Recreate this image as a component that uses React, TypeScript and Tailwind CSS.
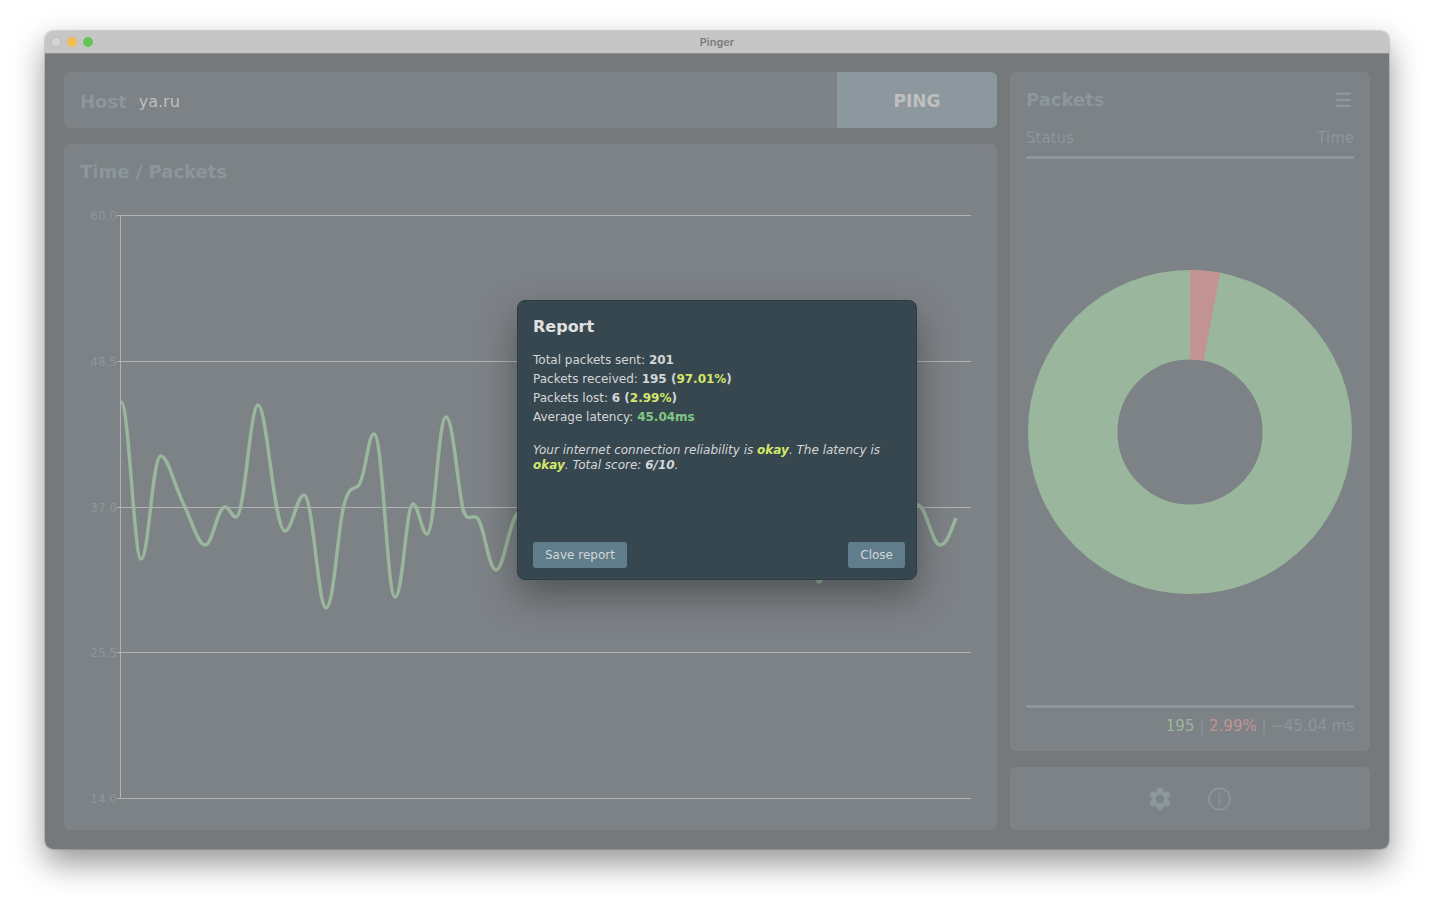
import React from "react";

const gridLines = [
  { label: "60.0", y: 215 },
  { label: "48.5", y: 361 },
  { label: "37.0", y: 507 },
  { label: "25.5", y: 652 },
  { label: "14.0", y: 798 },
];

const latencyCurve =
  "M121 402 C129 402 134 559 141 559 C149 559 152 456 161 456 C168 456 174 485 184 505 " +
  "C192 521 198 545 205 545 C213 545 217 507 225 507 C230 507 231 517 236 517 " +
  "C245 517 250 405 258 405 C267 405 274 531 285 531 C292 531 297 495 304 495 " +
  "C313 495 318 608 326 608 C334 608 338 525 344 505 C350 483 354 491 359 485 " +
  "C366 474 368 434 374 434 C383 434 387 597 395 597 C403 597 406 504 413 504 " +
  "C418 504 422 534 427 534 C435 534 438 417 446 417 C453 417 457 482 463 509 " +
  "C467 523 471 515 476 517 C484 520 488 570 496 570 C504 570 509 520 518 513 " +
  "C530 505 536 530 546 530 C558 530 562 470 574 470 C586 470 590 540 602 540 " +
  "C614 540 618 480 630 480 C642 480 646 550 658 550 C670 550 674 470 686 470 " +
  "C698 470 702 540 714 540 C726 540 732 480 744 480 C756 480 760 530 772 530 " +
  "C784 530 786 490 796 490 C806 490 811 582 819 582 C829 582 834 480 846 480 " +
  "C858 480 864 540 876 540 C888 540 906 505 918 505 C926 505 932 545 940 545 C947 545 951 530 956 518";

function LatencyChart() {
  return (
    <svg viewBox="80 192 901 622" className="min-h-0 w-full flex-1" role="img" aria-label="Time / Packets">
      {gridLines.map((g) => (
        <g key={g.label}>
          <line x1="117" x2="971" y1={g.y + 0.5} y2={g.y + 0.5} stroke="#b0b2b3" strokeWidth="1" />
          <text x="117" y={g.y + 5} textAnchor="end" fontSize="12" fill="#8d979b">
            {g.label}
          </text>
        </g>
      ))}
      <line x1="120.5" x2="120.5" y1="215" y2="798" stroke="#b0b2b3" strokeWidth="1" />
      <path d={latencyCurve} fill="none" stroke="#9ab69c" strokeWidth="3.5" />
    </svg>
  );
}

function PacketsDonut() {
  return (
    <svg viewBox="0 0 324 324" className="w-full max-w-[324px]" role="img" aria-label="Received and lost packets">
      <circle cx="162" cy="162" r="117.25" fill="none" stroke="#9ab69c" strokeWidth="89.5" />
      <path d="M162 0 A162 162 0 0 1 192.2 2.85 L175.5 90.8 A72.5 72.5 0 0 0 162 89.5 Z" fill="#c39393" />
    </svg>
  );
}

function Dashboard() {
  return (
    <div className="flex flex-1 gap-[13px] bg-[#75797c] px-[19px] pt-[18px] pb-[19px] text-[#8b979d]">
      <main className="flex min-w-0 flex-1 flex-col gap-4">
        <div className="flex h-14 items-stretch overflow-hidden rounded-md bg-[#7d8286]">
          <label htmlFor="host" className="flex items-center pt-[3px] pl-4 text-lg font-bold">
            Host
          </label>
          <input
            id="host"
            defaultValue="ya.ru"
            className="min-w-0 flex-1 bg-transparent px-3 pt-[3px] text-base text-[#bfbfbf] outline-none"
          />
          <button className="w-40 bg-[#8c989e] pt-[3px] text-[17px] font-bold text-[#bfbfbf]">PING</button>
        </div>
        <section className="flex flex-1 flex-col rounded-md bg-[#7d8286] p-4">
          <h2 className="mb-2 text-lg leading-6 font-bold">Time / Packets</h2>
          <LatencyChart />
        </section>
      </main>
      <aside className="flex w-[360px] flex-col gap-4">
        <section className="flex flex-1 flex-col rounded-md bg-[#7d8286] p-4">
          <div className="flex items-center justify-between">
            <h2 className="text-lg leading-6 font-bold">Packets</h2>
            <button aria-label="Menu" className="flex h-6 w-[22px] items-center justify-center">
              <svg width="16" height="16" viewBox="0 0 16 16" fill="#8b979d" aria-hidden="true">
                <path d="M1 .5h15V3H1zM1 6.7h15v2.5H1zM1 12.8h15v2.5H1z" />
              </svg>
            </button>
          </div>
          <table className="mt-[14px] w-full text-[15px] leading-6">
            <thead>
              <tr className="border-b-[3px] border-[#8b979d]">
                <th className="pb-[6px] text-left font-normal">Status</th>
                <th className="pb-[6px] text-right font-normal">Time</th>
              </tr>
            </thead>
          </table>
          <div className="flex flex-1 items-center justify-center">
            <PacketsDonut />
          </div>
          <p className="border-t-[3px] border-[#8b979d] pt-[9px] text-right text-[15px] leading-[18px]">
            <span className="text-[#9ab69c]">195</span> | <span className="text-[#c39393]">2.99%</span> | ~45.04 ms
          </p>
        </section>
        <div className="flex h-[63px] items-center justify-center gap-8 rounded-md bg-[#7d8286]">
          <button aria-label="Settings">
            <svg width="28" height="28" viewBox="0 0 24 24" fill="#8a989e" aria-hidden="true">
              <path d="M19.43 12.98c.04-.32.07-.64.07-.98s-.03-.66-.07-.98l2.11-1.65c.19-.15.24-.42.12-.64l-2-3.46c-.12-.22-.39-.3-.61-.22l-2.49 1c-.52-.4-1.08-.73-1.69-.98l-.38-2.65A.488.488 0 0 0 14 2h-4c-.25 0-.46.18-.49.42l-.38 2.65c-.61.25-1.17.59-1.69.98l-2.49-1c-.23-.09-.49 0-.61.22l-2 3.46c-.13.22-.07.49.12.64l2.11 1.65c-.04.32-.07.65-.07.98s.03.66.07.98l-2.11 1.65c-.19.15-.24.42-.12.64l2 3.46c.12.22.39.3.61.22l2.49-1c.52.4 1.08.73 1.69.98l.38 2.65c.03.24.24.42.49.42h4c.25 0 .46-.18.49-.42l.38-2.65c.61-.25 1.17-.59 1.69-.98l2.49 1c.23.09.49 0 .61-.22l2-3.46c.12-.22.07-.49-.12-.64l-2.11-1.65zM12 15.8a3.8 3.8 0 1 1 0-7.6 3.8 3.8 0 0 1 0 7.6z" transform="translate(.6 .6) scale(.95)" />
            </svg>
          </button>
          <button aria-label="About">
            <svg width="28" height="28" viewBox="0 0 28 28" fill="none" stroke="#8a989e" strokeWidth="1.6" aria-hidden="true">
              <circle cx="13.5" cy="14" r="10.6" />
              <path d="M13.5 12.5v7M13.5 8.2v1.8" />
            </svg>
          </button>
        </div>
      </aside>
    </div>
  );
}

function ReportDialog() {
  return (
    <div
      role="dialog"
      aria-labelledby="report-title"
      className="flex min-h-[280px] w-[400px] flex-col rounded-lg border border-[#2d3b42] bg-[#37474f] pt-[14px] pr-[11px] pb-[11px] pl-[15px] text-xs text-[#d4d6d7] shadow-[0_16px_36px_rgba(0,0,0,0.35)]"
    >
      <h1 id="report-title" className="text-base font-bold text-[#e0e0e0]">
        Report
      </h1>
      <div className="mt-3 leading-[19px]">
        <p>Total packets sent: <b>201</b></p>
        <p>Packets received: <b>195 (<span className="text-[#d4e86a]">97.01%</span>)</b></p>
        <p>Packets lost: <b>6 (<span className="text-[#d4e86a]">2.99%</span>)</b></p>
        <p>Average latency: <b className="text-[#81c784]">45.04ms</b></p>
      </div>
      <p className="mt-4 leading-[15px] italic">
        Your internet connection reliability is <b className="text-[#d4e86a]">okay</b>. The latency is{" "}
        <b className="text-[#d4e86a]">okay</b>. Total score: <b>6/10</b>.
      </p>
      <div className="mt-auto flex justify-between">
        <button className="rounded-[3px] bg-[#607d8b] px-3 py-[5px]">Save report</button>
        <button className="rounded-[3px] bg-[#607d8b] px-3 py-[5px]">Close</button>
      </div>
    </div>
  );
}

export default function App() {
  return (
    <div className="flex min-h-screen flex-col bg-white px-[45px] pt-[31px] pb-[61px] font-['DejaVu_Sans',sans-serif]">
      <div className="relative flex flex-1 flex-col overflow-hidden rounded-lg shadow-[0_0_1px_1px_rgba(0,0,0,0.14),0_14px_32px_rgba(0,0,0,0.42)]">
        <header className="relative flex h-[23px] items-center justify-center border-b border-[#8c8e8f] bg-[#c6c6c6]">
          <div className="absolute left-[6px] flex gap-[6px]">
            <span className="h-[10px] w-[10px] rounded-full border border-[#bdbdbd] bg-[#d4d4d4]" />
            <span className="h-[10px] w-[10px] rounded-full bg-[#f5bd4f]" />
            <span className="h-[10px] w-[10px] rounded-full bg-[#61c455]" />
          </div>
          <span className="font-['Inter',sans-serif] text-[11px] font-semibold text-[#7c7c7c]">Pinger</span>
        </header>
        <Dashboard />
        <div className="absolute inset-0 flex items-center justify-center">
          <ReportDialog />
        </div>
      </div>
    </div>
  );
}
